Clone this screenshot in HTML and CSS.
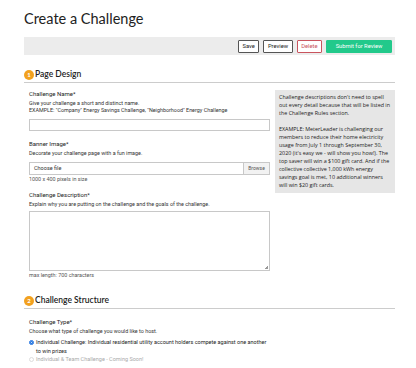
FILE: index.html
```html
<!DOCTYPE html>
<html>
<head>
<meta charset="utf-8">
<link rel="stylesheet" href="styles.css">
</head>
<body>
<div class="page">
  <h1 class="title">Create a Challenge</h1>
  <div class="toolbar">
    <button class="btn">Save</button>
    <button class="btn">Preview</button>
    <button class="btn btn-danger">Delete</button>
    <button class="btn btn-primary">Submit for Review</button>
  </div>

  <h2 class="section-head"><span class="num">1</span>Page Design</h2>
  <div class="section-grid">
    <div class="form-col">
      <div class="field">
        <div class="label">Challenge Name*</div>
        <div class="help">Give your challenge a short and distinct name.</div>
        <div class="help">EXAMPLE: "Company" Energy Savings Challenge, "Neighborhood" Energy Challenge</div>
        <div class="input input-name"></div>
      </div>
      <div class="field field-banner">
        <div class="label">Banner Image*</div>
        <div class="help">Decorate your challenge page with a fun image.</div>
        <div class="file">
          <span class="file-text">Choose file</span>
          <span class="file-btn">Browse</span>
        </div>
        <div class="help help-after">1000 x 400 pixels in size</div>
      </div>
      <div class="field field-desc">
        <div class="label">Challenge Description*</div>
        <div class="help">Explain why you are putting on the challenge and the goals of the challenge.</div>
        <div class="textarea"><span class="grip"></span></div>
        <div class="help help-after">max length: 700 characters</div>
      </div>
    </div>
    <aside class="aside">
      <p>Challenge descriptions don't need to spell out every detail because that will be listed in the Challenge Rules section.</p>
      <p>EXAMPLE: MeterLeader is challenging our members to reduce their home electricity usage from July 1 through September 30, 2020 (it's easy we - will show you how!). The top saver will win a $100 gift card. And if the collective collective 1,000 kWh energy savings goal is met, 10 additional winners will win $20 gift cards.</p>
    </aside>
  </div>

  <h2 class="section-head section-head-2"><span class="num">2</span>Challenge Structure</h2>
  <div class="form-col">
    <div class="field">
      <div class="label">Challenge Type*</div>
      <div class="help">Choose what type of challenge you would like to host.</div>
      <div class="radio-row">
        <span class="radio radio-on"></span>
        <span class="radio-text">Individual Challenge: Individual residential utility account holders compete against one another to win prizes</span>
      </div>
      <div class="radio-row radio-off">
        <span class="radio"></span>
        <span class="radio-text">Individual &amp; Team Challenge - Coming Soon!</span>
      </div>
    </div>
  </div>
</div>
</body>
</html>
```

FILE: styles.css
```css
html, body {
  margin: 0;
  padding: 0;
  background: #fff;
}
body {
  font-family: "Roboto", "Liberation Sans", sans-serif;
  color: #222;
}
.page {
  width: 371px;
  padding: 9px 0 0 24px;
}
.title {
  margin: 0;
  font-family: "Lato", sans-serif;
  font-weight: 400;
  font-size: 14.5px;
  line-height: 20px;
  color: #222;
}
.toolbar {
  margin-top: 8px;
  height: 18px;
  background: #ececec;
  display: flex;
  justify-content: flex-end;
  align-items: center;
  gap: 4px;
  padding-right: 3px;
}
.btn {
  height: 13px;
  padding: 0 3.5px;
  font-family: "Roboto", sans-serif;
  font-size: 5.8px;
  line-height: 11px;
  background: #fff;
  border: 1px solid #555;
  border-radius: 1px;
  color: #222;
  white-space: nowrap;
}
.btn-danger {
  border-color: #c9545e;
  color: #c9545e;
}
.btn-primary {
  background: #22c98b;
  border-color: #22c98b;
  color: #fff;
  padding: 0;
  width: 66px;
}
.section-head {
  margin: 14px 0 0;
  display: flex;
  align-items: center;
  gap: 1px;
  font-family: "Lato", sans-serif;
  font-weight: 600;
  font-size: 8.5px;
  line-height: 11px;
  color: #222;
  padding-bottom: 2px;
  border-bottom: 1px solid #ccc;
}
.num {
  width: 10px;
  height: 10px;
  border-radius: 50%;
  background: #f2a11f;
  color: #fff;
  font-size: 6px;
  line-height: 10px;
  text-align: center;
  font-weight: 700;
}
.section-grid {
  display: grid;
  grid-template-columns: 246px 120px;
  column-gap: 5px;
  margin-top: 9px;
  align-items: start;
}
.form-col {
  padding-left: 5px;
  width: 241px;
}
.field {
  display: flex;
  flex-direction: column;
}
.field-banner { margin-top: 11px; }
.field-desc { margin-top: 10px; }
.label {
  font-size: 6px;
  line-height: 8px;
  margin-top: -2px;
  color: #222;
}
.help {
  font-size: 5.4px;
  line-height: 7px;
  color: #333;
  white-space: nowrap;
}
.label + .help { margin-top: 2px; }
.help-after { margin-top: 1px; color: #555; }
.input {
  height: 12px;
  border: 1px solid #c8c8c8;
  box-sizing: border-box;
  margin-top: 5px;
}
.file {
  margin-top: 5px;
  height: 13px;
  box-sizing: border-box;
  border: 1px solid #c8c8c8;
  display: flex;
  align-items: stretch;
}
.file-text {
  flex: 1;
  font-size: 5.5px;
  line-height: 11px;
  padding-left: 4px;
  color: #333;
}
.file-btn {
  width: 26px;
  box-sizing: border-box;
  border-left: 1px solid #c8c8c8;
  background: #f2f2f2;
  font-size: 5px;
  line-height: 11px;
  text-align: center;
  color: #555;
}
.textarea {
  margin-top: 3px;
  height: 60px;
  box-sizing: border-box;
  border: 1px solid #c8c8c8;
  position: relative;
}
.grip {
  position: absolute;
  right: 1px;
  bottom: 1px;
  width: 3px;
  height: 3px;
  background: linear-gradient(135deg, transparent 50%, #999 50%);
}
.aside {
  background: #e6e6e6;
  padding: 3px 4px 4px;
  margin-top: -2px;
  font-family: "Open Sans", sans-serif;
  font-size: 5.4px;
  line-height: 8px;
  color: #222;
}
.aside p {
  margin: 0;
}
.aside p + p {
  margin-top: 8px;
}
.section-head-2 {
  margin-top: 16px;
}
.section-head-2 + .form-col {
  margin-top: 11px;
}
.radio-row {
  display: flex;
  align-items: flex-start;
  gap: 2px;
  margin-top: 3px;
}
.radio-row + .radio-row { margin-top: 0; }
.radio {
  flex: none;
  width: 5px;
  height: 5px;
  margin-top: 2px;
  border-radius: 50%;
  border: 1px solid #ddd;
  box-sizing: border-box;
  background: #fff;
}
.radio-on {
  border: 1.5px solid #1a6fe0;
  background: #fff;
  box-shadow: inset 0 0 0 1px #1a6fe0;
}
.radio-text {
  font-size: 5.5px;
  line-height: 8.5px;
  color: #222;
}
.radio-off .radio-text {
  color: #aaa;
}
```
